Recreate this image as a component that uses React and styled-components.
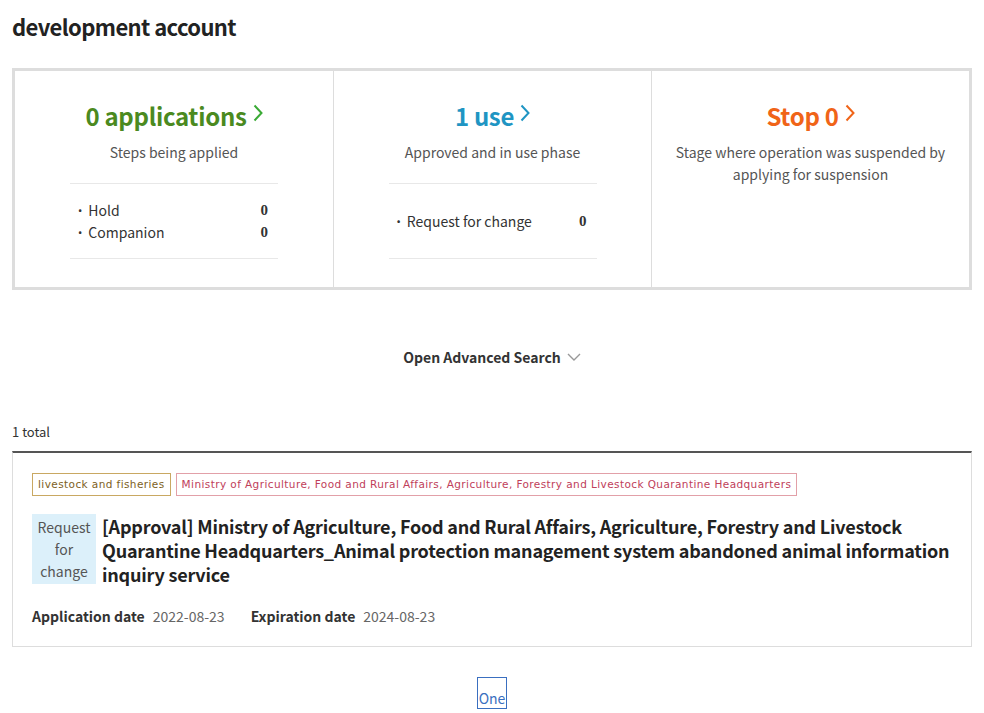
import styled, { createGlobalStyle } from 'styled-components';

const GlobalStyle = createGlobalStyle`
  body {
    margin: 0;
    background: #fff;
    font-family: "Noto Sans CJK KR", "Noto Sans", sans-serif;
    color: #333;
  }
`

const Page = styled.div`
  padding: 0 12px;
  width: 960px;
`

const PageTitle = styled.h1`
  margin: 0;
  padding-top: 10px;
  height: 58px;
  font-size: 22px;
  font-weight: 700;
  color: #222;
  letter-spacing: -0.6px;
  line-height: 32px;
`

const StatBox = styled.div`
  display: grid;
  grid-template-columns: 1fr 1fr 1fr;
  border: 3px solid #ddd;
  height: 216px;
`

const StatCol = styled.div`
  display: flex;
  flex-direction: column;
  align-items: center;
  padding-top: 28px;
  border-left: ${(p) => (p.first ? 'none' : '1px solid #ddd')};
`

const StatTitle = styled.div`
  display: flex;
  align-items: center;
  gap: 6px;
  font-size: 24px;
  font-weight: 700;
  line-height: 34px;
  letter-spacing: -0.3px;
  color: ${(p) => p.color};
  svg { margin-top: -6px; }
`

const StatDesc = styled.p`
  margin: 8px 0 0;
  font-size: 14px;
  line-height: 22px;
  color: #555;
  text-align: center;
  padding: 0 20px;
`

const StatList = styled.ul`
  list-style: none;
  margin: 20px 0 0;
  padding: 0;
  width: 208px;
  height: 74px;
  border-top: 1px solid #e8e8e8;
  border-bottom: 1px solid #e8e8e8;
  display: flex;
  flex-direction: column;
  justify-content: center;
`

const StatItem = styled.li`
  display: flex;
  justify-content: space-between;
  align-items: center;
  font-size: 14px;
  line-height: 22px;
  color: #333;
  padding: 0 10px 0 6px;
  &::before {
    content: '·';
    font-weight: 700;
    margin-right: 4px;
  }
  span:first-child { flex: 1; }
  b { font-family: "Liberation Serif", serif; font-weight: 700; font-size: 15px; }
`

const SearchToggle = styled.button`
  display: flex;
  align-items: center;
  gap: 6px;
  margin: 56px auto 0;
  border: none;
  background: none;
  font-family: inherit;
  font-size: 14px;
  font-weight: 700;
  color: #333;
  cursor: pointer;
`

const Total = styled.div`
  margin-top: 54px;
  font-size: 13px;
  color: #333;
  line-height: 20px;
`

const Card = styled.div`
  margin-top: 9px;
  border: 1px solid #ddd;
  border-top: 2px solid #555;
  padding: 20px 19px 20px;
  height: 153px;
`

const Tags = styled.div`
  display: flex;
  gap: 5px;
`

const Tag = styled.span`
  font-family: "DejaVu Sans", "Liberation Sans", sans-serif;
  font-size: 10.5px;
  letter-spacing: 0.41px;
  line-height: 21px;
  padding: 0 5px;
  border: 1px solid ${(p) => p.border};
  color: ${(p) => p.color};
  white-space: nowrap;
`

const TitleRow = styled.div`
  display: flex;
  gap: 6px;
  margin-top: 18px;
`

const StateBadge = styled.span`
  flex: none;
  width: 64px;
  background: #dcf0fa;
  color: #555;
  font-size: 14px;
  line-height: 22px;
  text-align: center;
  padding: 2px 0;
  height: 66px;
`

const ItemTitle = styled.h2`
  margin: 0;
  font-size: 18px;
  font-weight: 700;
  line-height: 24px;
  color: #222;
  letter-spacing: -0.2px;
`

const Dates = styled.div`
  display: flex;
  gap: 26px;
  margin-top: 20px;
  font-size: 14px;
`

const DateItem = styled.span`
  b { font-weight: 700; color: #333; margin-right: 8px; }
  span { color: #666; }
`

const Pager = styled.div`
  display: flex;
  justify-content: center;
  margin-top: 30px;
`

const PageBtn = styled.a`
  border: 1px solid #3a6fc0;
  color: #3a6fc0;
  font-size: 14px;
  padding: 9px 1px 0;
  height: 21px;
  line-height: 22px;
`

const Chevron = ({ color, down }) => (
  <svg width={down ? 14 : 10} height={down ? 10 : 18} viewBox={down ? '0 0 14 10' : '0 0 10 18'} fill="none">
    {down
      ? <path d="M1 2l6 6 6-6" stroke={color} strokeWidth="1.4" />
      : <path d="M1.5 1.5l7 7.5-7 7.5" stroke={color} strokeWidth="2" />}
  </svg>
)

const stats = [
  { title: '0 applications', color: '#4b8a1f', arrow: '#3aaa35', desc: 'Steps being applied', list: [['Hold', 0], ['Companion', 0]] },
  { title: '1 use', color: '#1f95c3', arrow: '#1f95c3', desc: 'Approved and in use phase', list: [['Request for change', 0]] },
  { title: 'Stop 0', color: '#f06418', arrow: '#f06418', desc: 'Stage where operation was suspended by applying for suspension' },
]

export default function App() {
  return (
    <Page>
      <GlobalStyle />
      <PageTitle>development account</PageTitle>
      <StatBox>
        {stats.map((s, i) => (
          <StatCol key={s.title} first={i === 0}>
            <StatTitle color={s.color}>{s.title} <Chevron color={s.arrow} /></StatTitle>
            <StatDesc>{s.desc}</StatDesc>
            {s.list ? (
              <StatList>
                {s.list.map(([k, v]) => (
                  <StatItem key={k}><span>{k}</span><b>{v}</b></StatItem>
                ))}
              </StatList>
            ) : null}
          </StatCol>
        ))}
      </StatBox>
      <SearchToggle>Open Advanced Search <Chevron color="#999" down /></SearchToggle>
      <Total>1 total</Total>
      <Card>
        <Tags>
          <Tag border="#c9a862" color="#7d5f1e">livestock and fisheries</Tag>
          <Tag border="#e2a0a8" color="#c0405a">Ministry of Agriculture, Food and Rural Affairs, Agriculture, Forestry and Livestock Quarantine Headquarters</Tag>
        </Tags>
        <TitleRow>
          <StateBadge>Request for change</StateBadge>
          <ItemTitle>[Approval] Ministry of Agriculture, Food and Rural Affairs, Agriculture, Forestry and Livestock Quarantine Headquarters_Animal protection management system abandoned animal information inquiry service</ItemTitle>
        </TitleRow>
        <Dates>
          <DateItem><b>Application date</b><span>2022-08-23</span></DateItem>
          <DateItem><b>Expiration date</b><span>2024-08-23</span></DateItem>
        </Dates>
      </Card>
      <Pager><PageBtn>One</PageBtn></Pager>
    </Page>
  )
}
